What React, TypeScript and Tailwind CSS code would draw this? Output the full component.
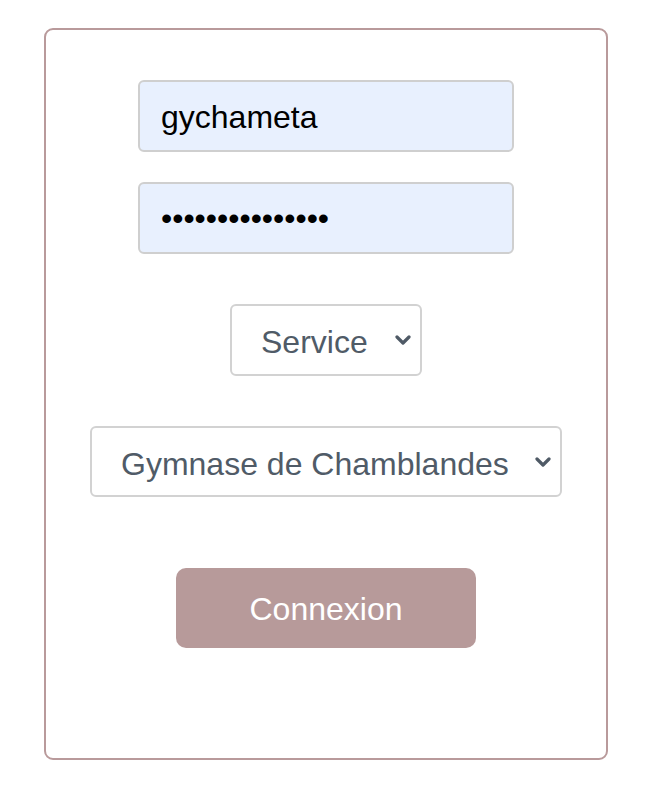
const Chevron = () => (
  <svg
    width="16"
    height="12"
    viewBox="0 0 16 12"
    className="pointer-events-none absolute top-1/2 -translate-y-1/2"
    style={{ right: 11 }}
  >
    <path d="M2 3 L8 9 L14 3" fill="none" stroke="#4f5a66" strokeWidth="3.2" strokeLinecap="round" strokeLinejoin="round" />
  </svg>
);

const fieldFont = { fontFamily: '"Liberation Sans", Arial, sans-serif' };

export default function App() {
  return (
    <div className="min-h-[804px] bg-white pt-7" style={fieldFont}>
      <form className="mx-[44px] flex h-[732px] w-[564px] flex-col items-center rounded-[9px] border-2 border-[#b99a9b] pt-[50px]">
        <input
          type="text"
          defaultValue="gychameta"
          className="h-[72px] w-[376px] rounded-[6px] border-2 border-[#cfcfcf] bg-[#e8f0fe] pl-[21px] pt-[2px] text-[32px] text-black outline-none"
        />
        <input
          type="password"
          defaultValue="aaaaaaaaaaaaaaa"
          className="mt-[30px] h-[72px] w-[376px] rounded-[6px] border-2 border-[#cfcfcf] bg-[#e8f0fe] pl-[21px] text-[32px] text-black outline-none"
        />

        <div className="relative mt-[50px]">
          <select className="h-[72px] w-[192px] appearance-none rounded-[6px] border-2 border-[#d2d2d2] bg-white pl-[29px] pt-[4px] text-[32px] text-[#505b67] outline-none">
            <option>Service</option>
          </select>
          <Chevron />
        </div>

        <div className="relative mt-[50px]">
          <select className="h-[71px] w-[472px] appearance-none rounded-[6px] border-2 border-[#d2d2d2] bg-white pl-[29px] pt-[4px] text-[32px] text-[#505b67] outline-none">
            <option>Gymnase de Chamblandes</option>
          </select>
          <Chevron />
        </div>

        <button
          type="button"
          className="mt-[71px] h-[80px] w-[300px] rounded-[10px] bg-[#b79a9a] pt-[2px] text-[32px] text-white"
        >
          Connexion
        </button>
      </form>
    </div>
  );
}
